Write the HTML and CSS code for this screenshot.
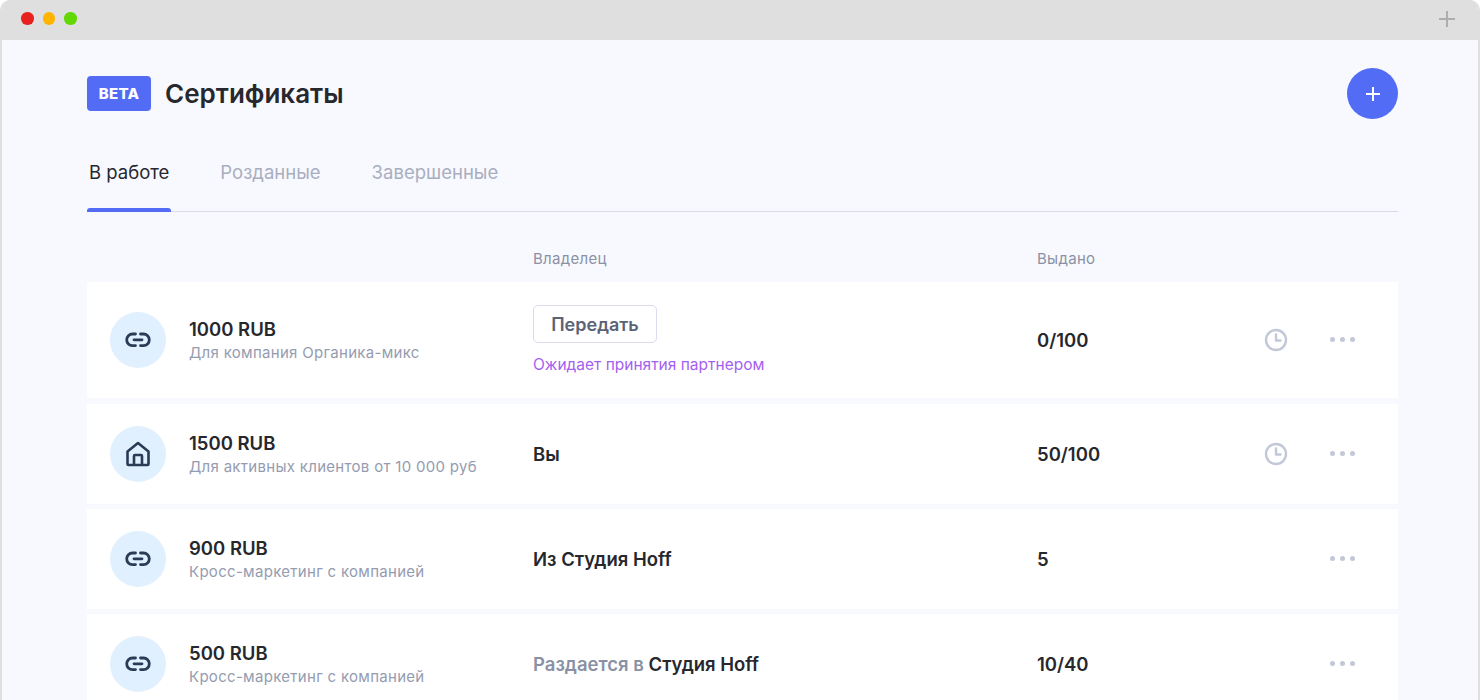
FILE: index.html
```html
<!DOCTYPE html>
<html lang="en">
<head>
    <meta charset="UTF-8">
    <meta name="viewport" content="width=device-width, initial-scale=1.0">
    <title>Сертификаты</title>
    <link rel="stylesheet" href="styles.css">
</head>
<body>
    <div class="window">
        <div class="titlebar">
            <div class="dots">
                <span class="dot dot-red"></span>
                <span class="dot dot-yellow"></span>
                <span class="dot dot-green"></span>
            </div>
            <svg class="new-tab" width="18" height="18" viewBox="0 0 18 18"><path d="M9 1v16M1 9h16" stroke="#adadad" stroke-width="2"/></svg>
        </div>
        <div class="page">
            <div class="header">
                <span class="badge">BETA</span>
                <h1>Сертификаты</h1>
                <button class="add-button">
                    <svg width="16" height="16" viewBox="0 0 16 16"><path d="M8 1v14M1 8h14" stroke="#fff" stroke-width="2"/></svg>
                </button>
            </div>
            <div class="tabs">
                <div class="tab tab-active">В работе</div>
                <div class="tab">Розданные</div>
                <div class="tab">Завершенные</div>
            </div>
            <div class="table-head">
                <div></div>
                <div>Владелец</div>
                <div>Выдано</div>
            </div>

            <div class="row row-first">
                <div class="cert">
                    <div class="cert-icon">
                        <svg width="28" height="28" viewBox="0 0 28 28"><use href="#link"/></svg>
                    </div>
                    <div>
                        <div class="cert-name">1000 RUB</div>
                        <div class="cert-desc">Для компания Органика-микс</div>
                    </div>
                </div>
                <div class="owner">
                    <button class="transfer">Передать</button>
                    <div class="pending">Ожидает принятия партнером</div>
                </div>
                <div class="issued">0/100</div>
                <div class="clock"><svg width="24" height="24" viewBox="0 0 24 24"><use href="#clock"/></svg></div>
                <div class="more"><span></span><span></span><span></span></div>
            </div>

            <div class="row">
                <div class="cert">
                    <div class="cert-icon">
                        <svg width="28" height="28" viewBox="0 0 28 28"><path d="M3.5 24V11.5L14 3l10.5 8.500V24a1 1 0 0 1-1 1h-19a1 1 0 0 1-1-1zM10 25v-9a1 1 0 0 1 1-1h6a1 1 0 0 1 1 1v9" fill="none" stroke="#2a3b56" stroke-width="2.600" stroke-linejoin="round"/></svg>
                    </div>
                    <div>
                        <div class="cert-name">1500 RUB</div>
                        <div class="cert-desc">Для активных клиентов от 10 000 руб</div>
                    </div>
                </div>
                <div class="owner">Вы</div>
                <div class="issued">50/100</div>
                <div class="clock"><svg width="24" height="24" viewBox="0 0 24 24"><use href="#clock"/></svg></div>
                <div class="more"><span></span><span></span><span></span></div>
            </div>

            <div class="row">
                <div class="cert">
                    <div class="cert-icon">
                        <svg width="28" height="28" viewBox="0 0 28 28"><use href="#link"/></svg>
                    </div>
                    <div>
                        <div class="cert-name">900 RUB</div>
                        <div class="cert-desc">Кросс-маркетинг с компанией</div>
                    </div>
                </div>
                <div class="owner">Из Студия Hoff</div>
                <div class="issued">5</div>
                <div class="clock"></div>
                <div class="more"><span></span><span></span><span></span></div>
            </div>

            <div class="row">
                <div class="cert">
                    <div class="cert-icon">
                        <svg width="28" height="28" viewBox="0 0 28 28"><use href="#link"/></svg>
                    </div>
                    <div>
                        <div class="cert-name">500 RUB</div>
                        <div class="cert-desc">Кросс-маркетинг с компанией</div>
                    </div>
                </div>
                <div class="owner"><span class="owner-muted">Раздается в</span> Студия Hoff</div>
                <div class="issued">10/40</div>
                <div class="clock"></div>
                <div class="more"><span></span><span></span><span></span></div>
            </div>
        </div>
    </div>

    <!-- shared icons -->
    <svg class="sprite" width="0" height="0">
        <symbol id="link" viewBox="0 0 28 28">
            <path d="M11.500 8H8.500a5.800 5.800 0 0 0 0 11.600h3M16.500 8h3a5.800 5.800 0 0 1 0 11.600h-3M10 13.800h8" fill="none" stroke="#2a3b56" stroke-width="2.800" stroke-linecap="round"/>
        </symbol>
        <symbol id="clock" viewBox="0 0 24 24">
            <circle cx="12" cy="12" r="10" fill="none" stroke="#c2c8d8" stroke-width="2.400"/>
            <path d="M12 6.500V12.500h4.500" fill="none" stroke="#c2c8d8" stroke-width="2.400" stroke-linecap="round" stroke-linejoin="round"/>
        </symbol>
    </svg>
</body>
</html>
```

FILE: styles.css
```css
* {
    box-sizing: border-box;
}
html, body {
    height: 100%;
}
body {
    margin: 0;
    overflow: hidden;
    background-color: #fff;
    font-family: Inter, "Noto Sans", sans-serif;
    color: #26282e;
}
.window {
    height: 700px;
    border-left: 2px solid #dfdfdf;
    border-right: 2px solid #dfdfdf;
    border-radius: 10px 10px 0 0;
    overflow: hidden;
    background-color: #f8f9fe;
}
.titlebar {
    display: flex;
    align-items: center;
    justify-content: space-between;
    height: 40px;
    padding: 0 22px 3px 19px;
    background-color: #dfdfdf;
}
.dots {
    display: flex;
    gap: 9px;
}
.dot {
    width: 12.500px;
    height: 12.500px;
    border-radius: 50%;
}
.dot-red { background-color: #e8201f; }
.dot-yellow { background-color: #ffb400; }
.dot-green { background-color: #62d700; }
.new-tab {
    display: block;
}
.page {
    padding: 0 80px 0 85px;
}
.header {
    display: flex;
    align-items: center;
    height: 79px;
    padding-top: 28px;
}
.badge {
    width: 64px;
    height: 35px;
    line-height: 36px;
    text-align: center;
    border-radius: 4px;
    background-color: #536cf6;
    color: #fff;
    font-size: 15px;
    font-weight: 800;
    letter-spacing: 0.3px;
}
h1 {
    margin: 0 0 0 14px;
    font-size: 26px;
    font-weight: 600;
    flex: 1;
}
.add-button {
    width: 51px;
    height: 51px;
    border: none;
    border-radius: 50%;
    background-color: #536cf6;
    display: flex;
    align-items: center;
    justify-content: center;
}
.tabs {
    display: flex;
    gap: 47px;
    height: 93px;
    margin-top: 0;
    padding-top: 41px;
    border-bottom: 1px solid #d9dbe6;
}
.tab {
    position: relative;
    padding: 0 2px;
    height: 51px;
    font-size: 18.500px;
    line-height: 24px;
    color: #a8aec0;
}
.tab-active {
    color: #26282e;
}
.tab-active::after {
    content: "";
    position: absolute;
    left: 0;
    right: 0;
    bottom: -1px;
    height: 4px;
    border-radius: 3px 3px 0 0;
    background-color: #536cf6;
}
.table-head, .row {
    display: grid;
    grid-template-columns: 446px 504px 227px 66px 1fr;
}
.table-head {
    height: 70px;
    padding-top: 37px;
    font-size: 15px;
    line-height: 20px;
    color: #8a91a5;
    letter-spacing: 0.3px;
}
.row {
    align-items: center;
    height: 100px;
    margin-bottom: 5px;
    background-color: #fff;
    box-shadow: 0 0 0 0 #fff;
}
.row-first {
    height: 116px;
    margin-bottom: 6px;
}
.cert {
    display: flex;
    align-items: center;
    gap: 23px;
    padding-left: 23px;
}
.cert-icon {
    flex: none;
    display: flex;
    align-items: center;
    justify-content: center;
    width: 56px;
    height: 56px;
    border-radius: 50%;
    background-color: #e0f0ff;
}
.cert-name {
    font-size: 18.500px;
    font-weight: 600;
    line-height: 24px;
}
.cert-desc {
    margin-top: 2px;
    font-size: 15px;
    line-height: 20px;
    color: #959cb0;
    letter-spacing: 0.3px;
    white-space: nowrap;
}
.owner, .issued {
    font-size: 18.500px;
    font-weight: 600;
}
.owner-muted {
    color: #8a91a5;
}
.transfer {
    display: block;
    width: 124px;
    height: 38px;
    border: 1.500px solid #d9dcec;
    border-radius: 5px;
    background-color: #fff;
    font-family: inherit;
    font-size: 18px;
    font-weight: 600;
    color: #5b6376;
}
.pending {
    margin-top: 12px;
    font-size: 15.500px;
    font-weight: 400;
    line-height: 20px;
    color: #a55ff0;
}
.clock {
    height: 24px;
}
.more {
    display: flex;
    gap: 5px;
    padding-bottom: 2px;
}
.more span {
    width: 5px;
    height: 5px;
    border-radius: 50%;
    background-color: #c2c8d8;
}
.sprite {
    position: absolute;
}
```
